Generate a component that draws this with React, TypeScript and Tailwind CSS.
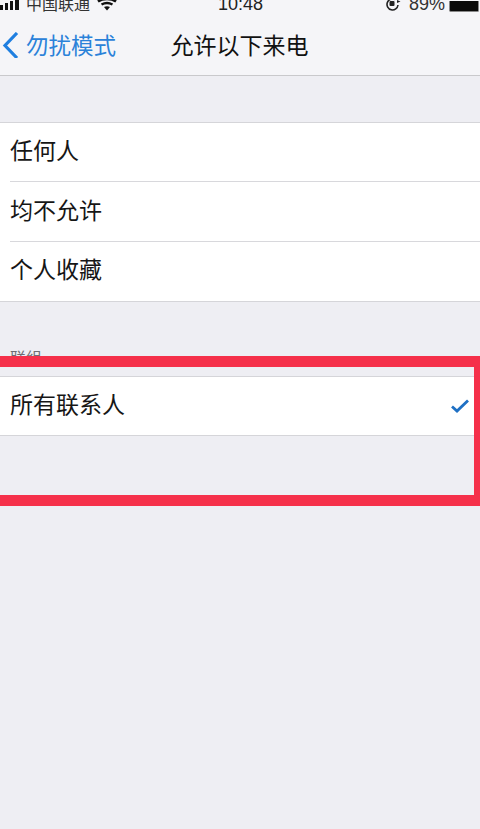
const font = { fontFamily: '"Noto Sans CJK SC", "Liberation Sans", sans-serif' };

function Row({ label, last, checked }: { label: string; last?: boolean; checked?: boolean }) {
    return (
        <div className={`relative flex items-center justify-between px-[10px] ${checked ? 'h-[58px]' : 'h-[59.33px]'}`}>
            <span className={`text-[23px] text-[#161616] ${checked ? 'pb-[5px]' : 'pb-[6px]'}`}>{label}</span>
            {checked && (
                <svg width="20" height="16" viewBox="0 0 20 16" fill="none">
                    <path d="M2 8.5L7 13L18 2.5" stroke="#1f70c4" strokeWidth="2.8" />
                </svg>
            )}
            {!last && <div className="absolute bottom-0 left-[10px] right-0 h-px bg-[#d8d8dc]" />}
        </div>
    );
}

export default function App() {
    return (
        <div className="relative h-[829px] w-[480px] overflow-hidden bg-[#eeeef3]" style={font}>
            {/* Status bar, cut off at the top of the picture */}
            <div className="bg-[#f5f5f8]">
                <div className="relative flex h-[12px] items-end overflow-hidden text-[#222]">
                    <div className="mb-[2px] flex w-[20px] items-end gap-[2px]">
                        <div className="h-[5px] w-[3px] bg-[#111]" />
                        <div className="h-[7px] w-[3px] bg-[#111]" />
                        <div className="h-[9px] w-[3px] bg-[#111]" />
                        <div className="h-[10px] w-[4px] bg-[#111]" />
                    </div>
                    <span className="ml-[6px] whitespace-nowrap text-[16px] leading-[18px] text-[#333]">中国联通</span>
                    <svg className="ml-[7px] mb-[1px]" width="20" height="12" viewBox="0 0 20 12" fill="none">
                        <path d="M1 2.5C6 -1 14 -1 19 2.5" stroke="#111" strokeWidth="2.6" />
                        <path d="M4.5 5.5C8 3.5 12 3.5 15.5 5.5" stroke="#111" strokeWidth="2.4" />
                        <path d="M7 8L10 11.5L13 8C11 7 9 7 7 8Z" fill="#111" />
                    </svg>
                    <span className="ml-[101px] mb-[-2px] text-[18px] leading-[20px] text-[#222]" style={{ fontFamily: '"Liberation Sans", sans-serif' }}>10:48</span>
                    <svg className="ml-[122px] mb-[1px]" width="16" height="13" viewBox="0 0 16 13" fill="none">
                        <path d="M13 7A5.5 5.5 0 1 1 10 1.5" stroke="#222" strokeWidth="1.6" />
                        <rect x="4.5" y="3" width="5" height="5" rx="1" fill="#222" />
                        <path d="M12 2L15.5 3.5L12 5Z" fill="#222" />
                    </svg>
                    <span className="ml-[8px] mb-[-2px] text-[18px] leading-[20px] text-[#333]" style={{ fontFamily: '"Liberation Sans", sans-serif' }}>89%</span>
                    <div className="ml-[4px] h-[11px] w-[30px] rounded-b-[2px] border border-t-0 border-[#888] bg-[#0a0a0a]" />
                </div>
                {/* Nav bar */}
                <div className="relative flex h-[64px] items-center justify-center border-b border-[#c9c9cc]">
                    <div className="absolute left-0 top-0 flex h-full items-center text-[#2b82d9]">
                        <svg className="ml-[2px] mt-[3px]" width="17" height="26" viewBox="0 0 17 26" fill="none">
                            <path d="M15 1L3 13.5L15 26" stroke="#1f7fe0" strokeWidth="3.2" />
                        </svg>
                        <span className="ml-[7px] mt-[2px] text-[22.5px] leading-none">勿扰模式</span>
                    </div>
                    <span className="mt-[2px] pr-[1px] text-[23px] leading-none text-[#111]">允许以下来电</span>
                </div>
            </div>

            <div className="mt-[46px] border-y border-[#d5d5d9] bg-white">
                <Row label="任何人" />
                <Row label="均不允许" />
                <Row label="个人收藏" last />
            </div>

            <div className="mt-[45px] flex h-[29px] items-start overflow-hidden pl-[10px]">
                <span className="text-[16px] leading-[20px] text-[#6d6d72]">联组</span>
            </div>

            <div className="border-y border-[#d5d5d9] bg-white">
                <Row label="所有联系人" last checked />
            </div>

            {/* Red annotation box, runs off the left edge */}
            <div className="absolute left-[-12px] right-0 top-[356px] h-[150px] border-y-[11px] border-x-[6px] border-[#f5304a]" />
        </div>
    );
}
